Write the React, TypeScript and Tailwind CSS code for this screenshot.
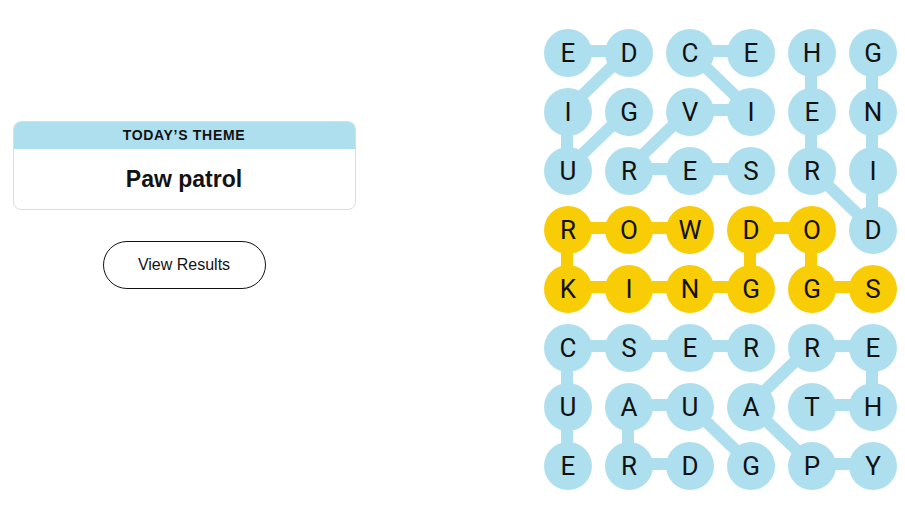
import React from "react"

const BLUE = "#aedfee"
const YELLOW = "#f8cd05"

const rows = [
  "EDCEHG",
  "IGVIEN",
  "URESRI",
  "ROWDOD",
  "KINGGS",
  "CSERRE",
  "UAUATH",
  "ERDGPY",
]

// cells that belong to the spangram
const spangram = new Set(["3-0", "3-1", "3-2", "3-3", "3-4", "4-0", "4-1", "4-2", "4-3", "4-4", "4-5"])

type Link = [number, number, number, number, boolean?]

const links: Link[] = [
  // GUIDE
  [0, 0, 0, 1], [0, 1, 1, 0], [1, 0, 2, 0], [2, 0, 1, 1],
  // SERVICE
  [0, 2, 0, 3], [0, 2, 1, 3], [1, 3, 1, 2], [1, 2, 2, 1], [2, 1, 2, 2], [2, 2, 2, 3],
  // HERDING
  [0, 4, 1, 4], [1, 4, 2, 4], [2, 4, 3, 5], [3, 5, 2, 5], [2, 5, 1, 5], [1, 5, 0, 5],
  // WORKINGDOGS
  [3, 2, 3, 1, true], [3, 1, 3, 0, true], [3, 0, 4, 0, true], [4, 0, 4, 1, true], [4, 1, 4, 2, true],
  [4, 2, 4, 3, true], [4, 3, 3, 3, true], [3, 3, 3, 4, true], [3, 4, 4, 4, true], [4, 4, 4, 5, true],
  // RESCUE
  [5, 3, 5, 2], [5, 2, 5, 1], [5, 1, 5, 0], [5, 0, 6, 0], [6, 0, 7, 0],
  // GUARD
  [7, 3, 6, 2], [6, 2, 6, 1], [6, 1, 7, 1], [7, 1, 7, 2],
  // THERAPY
  [6, 4, 6, 5], [6, 5, 5, 5], [5, 5, 5, 4], [5, 4, 6, 3], [6, 3, 7, 4], [7, 4, 7, 5],
]

const cx = (c: number) => 23 + c * 61
const cy = (r: number) => 22 + r * 59

export default function App() {
  return (
    <div className="flex h-[509px] w-[905px] justify-between bg-white pr-[8px] text-[#121212]" style={{ fontFamily: '"Liberation Sans", Arial, sans-serif' }}>
      {/* Left: theme card + results */}
      <div className="flex w-[368px] flex-col items-center px-3 pt-[121px]">
        <div className="w-[343px] overflow-hidden rounded-lg border border-[#dcdcdc]">
          <div className="flex h-[27px] items-center justify-center bg-[#aedfee] text-[14px] font-bold tracking-[0.7px]">
            TODAY’S THEME
          </div>
          <div className="flex h-[60px] items-center justify-center text-[23px] font-bold">Paw patrol</div>
        </div>
        <button className="mt-[31px] h-[48px] w-[163px] rounded-full border border-[#121212] text-[16px]">
          View Results
        </button>
      </div>

      {/* Right: board */}
      <div className="pt-[29px]">
        <div className="relative grid grid-cols-[repeat(6,48px)] gap-x-[13px] gap-y-[11px]">
          <svg className="absolute left-0 top-0" width="353" height="461">
            {links.map(([r1, c1, r2, c2, gold], i) => (
              <line
                key={i}
                x1={cx(c1)}
                y1={cy(r1)}
                x2={cx(c2)}
                y2={cy(r2)}
                stroke={gold ? YELLOW : BLUE}
                strokeWidth={12}
              />
            ))}
          </svg>
          {rows.map((row, r) =>
            row.split("").map((ch, c) => (
              <div
                key={`${r}-${c}`}
                className={`relative flex h-[48px] w-[48px] items-center justify-center rounded-full font-['Roboto',sans-serif] text-[26px] ${
                  spangram.has(`${r}-${c}`) ? "bg-[#f8cd05]" : "bg-[#aedfee]"
                }`}
              >
                {ch}
              </div>
            ))
          )}
        </div>
      </div>
    </div>
  )
}
